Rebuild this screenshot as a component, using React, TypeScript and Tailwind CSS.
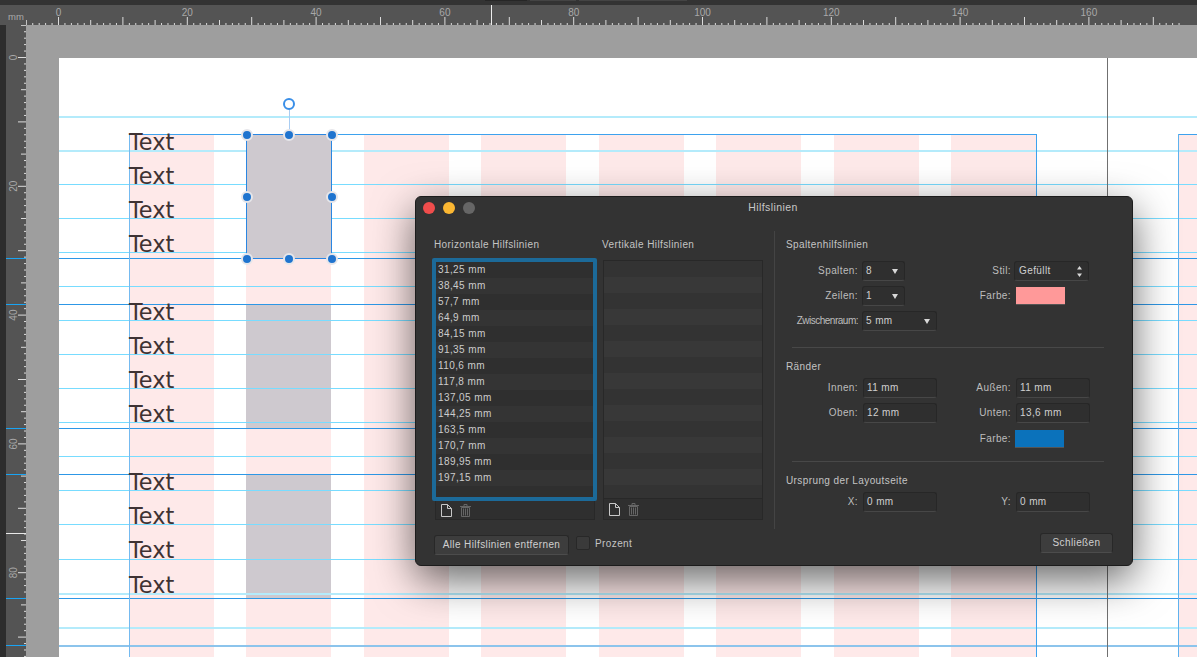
import React from "react";

const F = "[font-family:'Liberation_Sans',Arial,sans-serif]";
const PX = 6.44;
const range = (n: number) => Array.from({ length: n }, (_, i) => i);

const columns = [70, 187, 305, 422, 540, 657, 775, 892, 1119];
const lightGuides = [58, 92, 126, 160, 194, 228, 262, 296, 330, 364, 398, 432, 466, 501, 535, 569];
const paleGuides = [58, 92, 535, 569];
const marginGuides = [200, 246, 370, 416, 540];
const textBaselines = [92, 126, 160, 194, 262, 296, 330, 364, 432, 466, 500, 535];
const handles: [number, number][] = [[187, 76], [229.5, 76], [272, 76], [187, 138], [272, 138], [187, 200], [229.5, 200], [272, 200]];
const hValues = ["31,25 mm", "38,45 mm", "57,7 mm", "64,9 mm", "84,15 mm", "91,35 mm", "110,6 mm", "117,8 mm", "137,05 mm", "144,25 mm", "163,5 mm", "170,7 mm", "189,95 mm", "197,15 mm", ""];

function TopRuler() {
  return (
    <svg width="1171" height="20" className="block">
      {range(180).map((i) => {
        const x = 32.5 + (i - 5) * PX;
        const mm = i - 5;
        const h = mm % 10 === 0 ? 8 : mm % 5 === 0 ? 5 : 2;
        return <line key={i} x1={x} x2={x} y1={20 - h} y2={20} stroke="#dcdcdc" strokeWidth="1" />;
      })}
      {range(9).map((i) => (
        <text key={i} x={32.5 + i * 20 * PX} y="11" textAnchor="middle" fontSize="10" fill="#a8a8a8" fontFamily="Liberation Sans">
          {i * 20}
        </text>
      ))}
      <line x1="465.5" x2="465.5" y1="0" y2="20" stroke="#ededed" />
    </svg>
  );
}

function LeftRuler() {
  const marks = [233, 279, 403, 449, 573, 620];
  return (
    <svg width="20" height="632" className="block">
      {range(100).map((i) => {
        const mm = i - 5;
        const y = 32.5 + mm * PX;
        const h = mm % 10 === 0 ? 8 : mm % 5 === 0 ? 5 : 2;
        return <line key={i} x1={20 - h} x2={20} y1={y} y2={y} stroke="#dcdcdc" />;
      })}
      {marks.map((y) => (
        <line key={y} x1="0" x2="20" y1={y + 0.5} y2={y + 0.5} stroke="#18a4f4" />
      ))}
      <line x1="0" x2="20" y1="508.5" y2="508.5" stroke="#e8e8e8" />
      {range(5).map((i) => {
        const y = 32.5 + i * 20 * PX;
        return (
          <text key={i} x="0" y="0" transform={`translate(11 ${y}) rotate(-90)`} textAnchor="middle" fontSize="10" fill="#a8a8a8" fontFamily="Liberation Sans">
            {i * 20}
          </text>
        );
      })}
    </svg>
  );
}

function Page() {
  return (
    <div className="relative flex-1 bg-white overflow-hidden">
      {columns.map((x) => (
        <div key={x} className="absolute top-[76px] bottom-0 w-[85px] bg-[#fee9e9]" style={{ left: x }} />
      ))}
      {[[246, 124], [416, 124]].map(([t, h]) => (
        <div key={t} className="absolute left-[187px] w-[85px] bg-[#cec9cf]" style={{ top: t, height: h }} />
      ))}
      {lightGuides.map((y) => (
        <div key={y} className={paleGuides.includes(y) ? "absolute left-0 right-0 h-[1.5px] bg-[#b4ebfb]" : "absolute left-0 right-0 h-px bg-[#78dcff]"} style={{ top: y }} />
      ))}
      {marginGuides.map((y) => (
        <div key={y} className="absolute left-0 right-0 h-px bg-[#2d97e6]" style={{ top: y }} />
      ))}
      <div className="absolute left-0 right-0 top-[587px] h-[1.5px] bg-[#8cc4ec]" />
      <div className="absolute left-[69.5px] top-[76px] bottom-0 w-[1.5px] bg-[#74baf0]" />
      <div className="absolute left-[70px] top-[76px] w-[908px] h-px bg-[#3da2ee]" />
      <div className="absolute left-[977px] top-[76px] bottom-0 w-px bg-[#3da2ee]" />
      <div className="absolute left-[1119px] top-[76px] right-0 h-px bg-[#3da2ee]" />
      <div className="absolute left-[1119px] top-[76px] bottom-0 w-px bg-[#5fb2ee]" />
      <div className="absolute left-[1048px] top-0 bottom-0 w-px bg-[#707070]" />
      {textBaselines.map((y) => (
        <div key={y} className="absolute left-[70px] h-[24px] text-[22.4px] leading-[24px] text-[#3f3233] [font-family:'DejaVu_Sans',sans-serif]" style={{ top: y - 20 }}>
          Text
        </div>
      ))}
      <div className="absolute left-[187px] top-[76px] w-[86px] h-[125px] bg-[#cec9cf] border border-[#2a86e2]" />
      <div className="absolute left-[229.5px] top-[51px] w-px h-[25px] bg-[#a9cdf2]" />
      <div className="absolute left-[224px] top-[40px] w-[12px] h-[12px] rounded-full bg-white border-[2px] border-[#3a8fe8]" />
      {handles.map(([x, y]) => (
        <div key={`${x}-${y}`} className="absolute w-[12px] h-[12px] rounded-full bg-[#1f74cf] border-[2px] border-[#e6e6ea]" style={{ left: x - 5.5, top: y - 5.5 }} />
      ))}
    </div>
  );
}

function Arrow() {
  return (
    <svg width="6" height="5" viewBox="0 0 6 5">
      <polygon points="0,0 6,0 3,5" fill="#d8d8d8" />
    </svg>
  );
}

const fieldCls = "h-[20px] flex items-center justify-between pl-[3px] pr-[6px] rounded-[3px] bg-[#2f2f2f] border border-[#272727] border-b-[#474747] text-[#cfcfcf]";

function Select({ w, value }: { w: string; value: string }) {
  return (
    <div className={`${fieldCls} ${w} ml-[4px]`}>
      <span>{value}</span>
      <Arrow />
    </div>
  );
}

function Input({ value }: { value: string }) {
  return <div className={`${fieldCls} w-[74px] ml-[5px]`}>{value}</div>;
}

function Label({ children }: { children: React.ReactNode }) {
  return <div className="text-right text-[#bdbdbd]">{children}</div>;
}

function DocIcon() {
  return (
    <svg width="11" height="13" viewBox="0 0 11 13" fill="none" stroke="#c8c8c8" strokeWidth="1">
      <path d="M.5.5h6l4 4v8h-10z" />
      <path d="M6.5.5v4h4" />
    </svg>
  );
}

function TrashIcon() {
  return (
    <svg width="11" height="13" viewBox="0 0 11 13" fill="none" stroke="#666" strokeWidth="1">
      <path d="M0 2.5h11M4 2V.5h3V2" />
      <path d="M1.5 3.5h8v9h-8zM3.5 4.5v7M5.5 4.5v7M7.5 4.5v7" />
    </svg>
  );
}

function ListFooter({ className }: { className: string }) {
  return (
    <div className={`flex items-center gap-[8px] pl-[5px] bg-[#2f2f2f] border-x border-b border-[#282828] ${className}`}>
      <DocIcon />
      <TrashIcon />
    </div>
  );
}

function Dialog() {
  return (
    <div className={`absolute left-[415px] top-[196px] w-[718px] h-[370px] flex flex-col rounded-[6px] bg-[#333333] border border-[#1c1c1c] shadow-[0_14px_42px_rgba(0,0,0,0.6)] text-[10px] leading-[14px] tracking-[0.4px] text-[#c4c4c4] ${F}`}>
      <div className="relative h-[22px] flex items-center gap-[8px] pl-[7px] shrink-0">
        <span className="w-[12px] h-[12px] rounded-full bg-[#f04d4c]" />
        <span className="w-[12px] h-[12px] rounded-full bg-[#fbb732]" />
        <span className="w-[12px] h-[12px] rounded-full bg-[#666666]" />
        <div className="absolute inset-x-0 top-[3px] pr-[2px] text-center text-[#c8c8c8] text-[10.5px]">Hilfslinien</div>
      </div>
      <div className="flex pt-[12px] pl-[17px]">
        <div className="w-[341px] flex flex-col">
          <div className="flex h-[14px] mt-[7px]">
            <div className="w-[168px] pl-[1px]">Horizontale Hilfslinien</div>
            <div className="pl-[1px]">Vertikale Hilfslinien</div>
          </div>
          <div className="flex mt-[6px]">
            <div className="w-[164px] flex flex-col">
              <div className="h-[243px] w-[165px] -ml-[1px] rounded-[2px] border-[4px] border-[#1c6a99] overflow-hidden">
                {hValues.map((v, i) => (
                  <div key={i} className={`h-[16px] leading-[16px] pl-[2px] text-[#cccccc] ${i % 2 === 0 ? "bg-[#2f2f2f]" : "bg-[#343434]"}`}>
                    {v}
                  </div>
                ))}
              </div>
              <ListFooter className="h-[19px] mx-[2px]" />
            </div>
            <div className="w-[160px] ml-[6px] mt-[2px] flex flex-col">
              <div className="h-[239px] border border-[#282828] overflow-hidden">
                {range(15).map((i) => (
                  <div key={i} className={`h-[16px] ${i % 2 === 0 ? "bg-[#333333]" : "bg-[#383838]"}`} />
                ))}
              </div>
              <ListFooter className="h-[21px]" />
            </div>
          </div>
        </div>
        <div className="w-px h-[298px] bg-[#444444]" />
        <div className="ml-[11px] w-[320px] flex flex-col">
          <div className="mt-[7px] h-[14px]">Spaltenhilfslinien</div>
          <div className="mt-[9px] grid grid-cols-[72px_79px_74px_79px] auto-rows-[25px] items-start">
            <Label><div className="pt-[3px]">Spalten:</div></Label>
            <Select w="w-[43px]" value="8" />
            <Label><div className="pt-[3px]">Stil:</div></Label>
            <div className={`${fieldCls} w-[75px] ml-[3px]`}>
              <span className="pl-[1px]">Gefüllt</span>
              <svg width="5" height="11" viewBox="0 0 5 11"><polygon points="2.5,0 5,3.5 0,3.5" fill="#d8d8d8" /><polygon points="0,7.5 5,7.5 2.5,11" fill="#d8d8d8" /></svg>
            </div>
            <Label><div className="pt-[3px]">Zeilen:</div></Label>
            <Select w="w-[43px]" value="1" />
            <Label><div className="pt-[3px]">Farbe:</div></Label>
            <div className="ml-[5px] mt-[1px] w-[49px] h-[18px] bg-[#ff9999] border-b border-[#555]" />
            <div className="text-right text-[#bdbdbd] whitespace-nowrap tracking-[-0.5px] pt-[3px]">Zwischenraum:</div>
            <Select w="w-[75px]" value="5 mm" />
          </div>
          <div className="ml-[6px] mt-[11px] w-[312px] h-px bg-[#484848]" />
          <div className="mt-[12px] h-[14px]">Ränder</div>
          <div className="mt-[4px] grid grid-cols-[72px_79px_74px_79px] auto-rows-[24.5px] items-start">
            <Label><div className="pt-[3px]">Innen:</div></Label>
            <Input value="11 mm" />
            <Label><div className="pt-[3px]">Außen:</div></Label>
            <Input value="11 mm" />
            <Label><div className="pt-[3px]">Oben:</div></Label>
            <Input value="12 mm" />
            <Label><div className="pt-[3px]">Unten:</div></Label>
            <Input value="13,6 mm" />
            <div />
            <div />
            <Label><div className="pt-[5px]">Farbe:</div></Label>
            <div className="ml-[4px] mt-[3px] w-[49px] h-[18px] bg-[#0b72bb] border-b border-[#555]" />
          </div>
          <div className="ml-[6px] mt-[9.5px] w-[312px] h-px bg-[#484848]" />
          <div className="mt-[12px] h-[14px]">Ursprung der Layoutseite</div>
          <div className="mt-[4px] grid grid-cols-[72px_79px_74px_79px] auto-rows-[24px] items-start">
            <Label><div className="pt-[3px]">X:</div></Label>
            <Input value="0 mm" />
            <Label><div className="pt-[3px]">Y:</div></Label>
            <Input value="0 mm" />
          </div>
        </div>
      </div>
      <div className="absolute left-[18px] top-[338px] flex items-start">
        <button className="w-[135px] h-[20px] rounded-[3px] bg-[#3d3d3d] border border-[#282828] border-b-[#4c4c4c] text-[#d0d0d0] tracking-[0.4px]">Alle Hilfslinien entfernen</button>
        <span className="ml-[7px] mt-[1px] w-[14px] h-[14px] rounded-[2px] bg-[#3a3a3a] border border-[#282828]" />
        <span className="ml-[5px] mt-[2px]">Prozent</span>
      </div>
      <button className="absolute left-[624px] top-[336px] w-[73px] h-[20px] rounded-[3px] bg-[#3d3d3d] border border-[#282828] border-b-[#4c4c4c] text-[#d0d0d0] tracking-[0.4px]">Schließen</button>
    </div>
  );
}

export default function App() {
  return (
    <div className="relative w-[1197px] h-[657px] overflow-hidden flex flex-col bg-[#2d2d2d]">
      <div className="h-[5px] bg-[#333333] shrink-0 flex items-start gap-[3px] pl-[485px]">
        <span className="w-[42px] h-[1px] bg-[#262626]" />
        <span className="w-[46px] h-[1px] bg-[#444]" />
        <span className="w-[108px] h-[1px] bg-[#444]" />
      </div>
      <div className="flex h-[20px] shrink-0">
        <div className={`w-[26px] pl-[8px] bg-[#545454] text-[9.5px] leading-[24px] text-[#aaaaaa] ${F}`}>mm</div>
        <div className="flex-1 bg-[#545454]">
          <TopRuler />
        </div>
      </div>
      <div className="flex flex-1 min-h-0">
        <div className="w-[6px] bg-[#2d2d2d]" />
        <div className="w-[20px] bg-[#545454]">
          <LeftRuler />
        </div>
        <div className="flex-1 flex pl-[33px] pt-[33px] bg-[#9e9e9e]">
          <Page />
        </div>
      </div>
      <Dialog />
    </div>
  );
}
